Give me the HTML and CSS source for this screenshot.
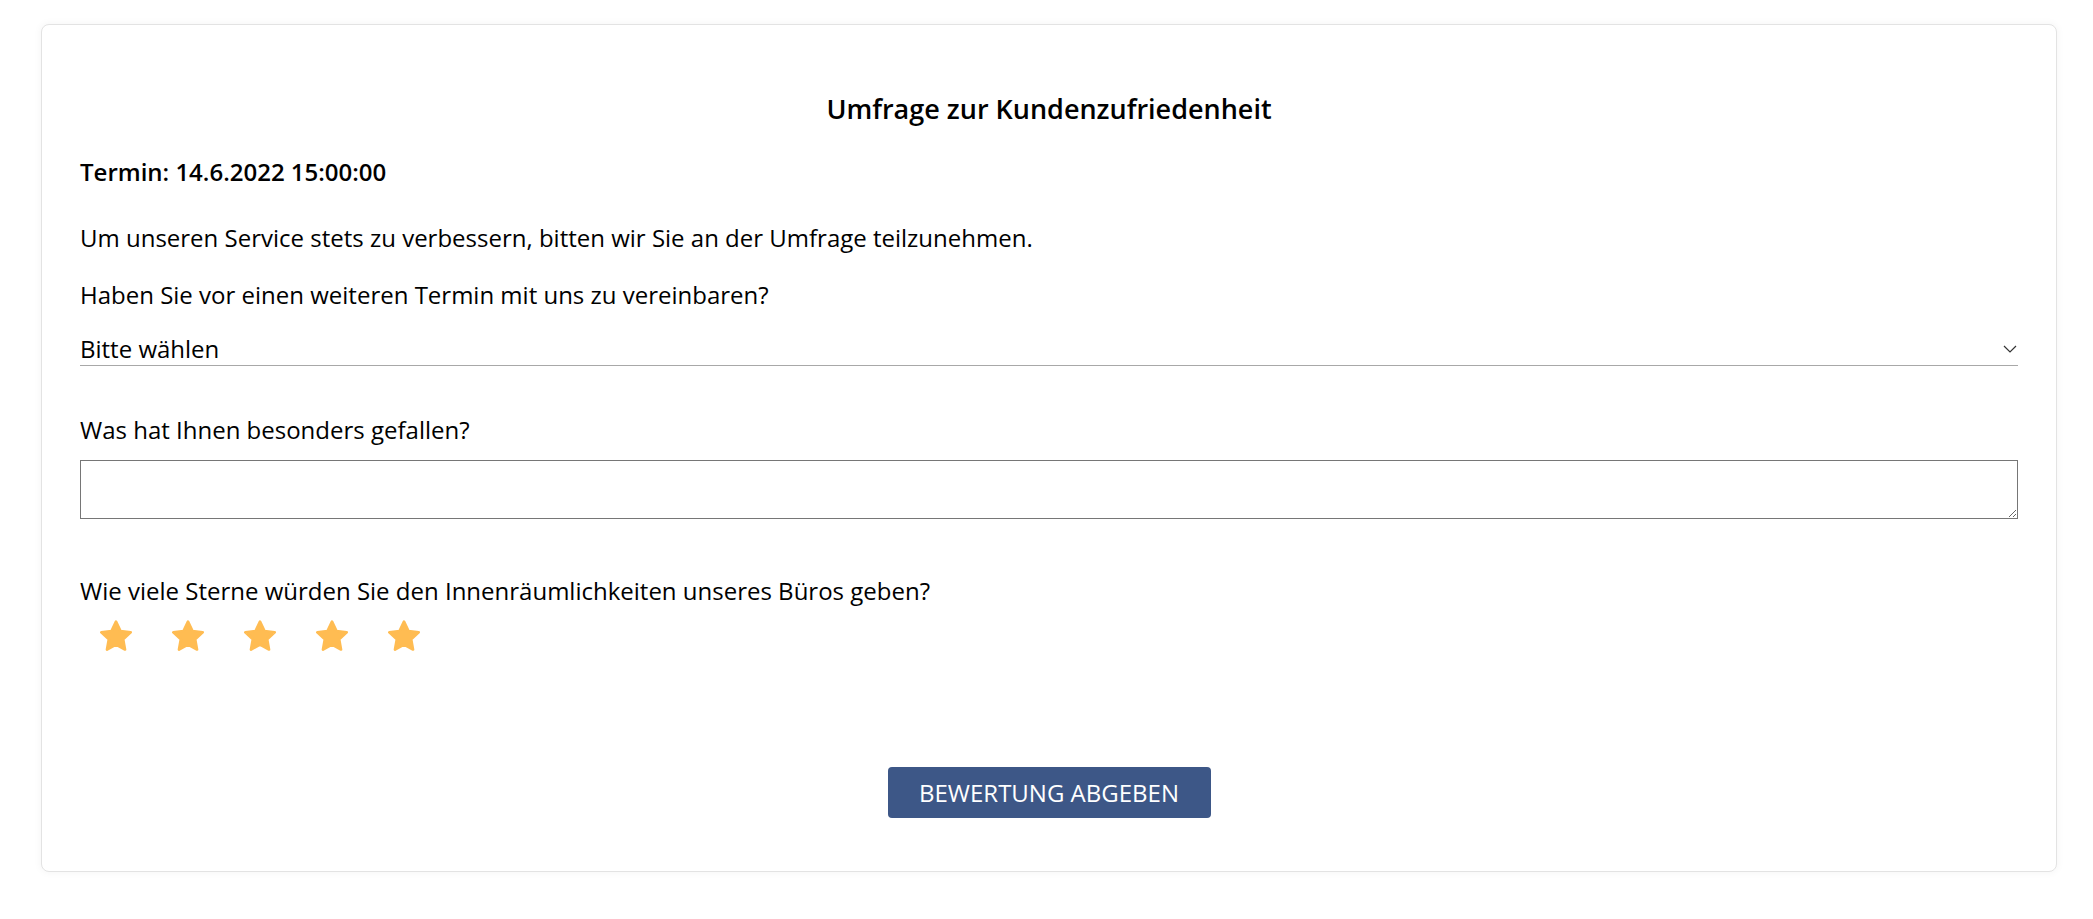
FILE: index.html
```html
<!DOCTYPE html>
<html lang="de">
<head>
  <meta charset="UTF-8" />
  <meta name="viewport" content="width=device-width, initial-scale=1.0"/>
  <title>Umfrage zur Kundenzufriedenheit</title>
  <link rel="stylesheet" href="styles.css">
</head>
<body>
  <div class="survey-card">
    <h2 class="survey-title">Umfrage zur Kundenzufriedenheit</h2>
    <div class="appointment">Termin: 14.6.2022 15:00:00</div>
    <p class="intro">Um unseren Service stets zu verbessern, bitten wir Sie an der Umfrage teilzunehmen.</p>

    <label class="question q-first" for="followup">Haben Sie vor einen weiteren Termin mit uns zu vereinbaren?</label>
    <div class="select-wrap">
      <select id="followup">
        <option>Bitte wählen</option>
        <option>Ja</option>
        <option>Nein</option>
      </select>
      <svg class="chevron" width="14" height="8" viewBox="0 0 14 8">
        <path d="M1 1l6 6 6-6" fill="none" stroke="#333" stroke-width="1.2"/>
      </svg>
    </div>

    <label class="question q-text" for="liked">Was hat Ihnen besonders gefallen?</label>
    <textarea id="liked" class="answer"></textarea>

    <div class="question q-stars">Wie viele Sterne würden Sie den Innenräumlichkeiten unseres Büros geben?</div>
    <div class="stars" id="stars"></div>

    <div class="actions">
      <button class="btn-submit">BEWERTUNG ABGEBEN</button>
    </div>
  </div>

  <script>
    // five rating stars, all selected
    const STAR = '<svg viewBox="2.4 2.2 19.2 19.2" width="32" height="32"><path d="M12 3.2l2.7 5.6 6.1.8-4.5 4.2 1.1 6.1L12 17l-5.4 2.9 1.1-6.1-4.5-4.2 6.1-.8z" fill="#ffbc52" stroke="#ffbc52" stroke-width="1.6" stroke-linejoin="round"/></svg>';
    const stars = document.getElementById("stars");
    for (let i = 0; i < 5; i++) {
      const s = document.createElement("span");
      s.className = "star";
      s.innerHTML = STAR;
      stars.appendChild(s);
    }
  </script>
</body>
</html>
```

FILE: styles.css
```css
body {
  margin: 0;
  padding: 24px 36px 40px 41px;
  background: #fff;
  font-family: "Open Sans", "Noto Sans", Arial, sans-serif;
  color: #000;
}

.survey-card {
  background: #fff;
  border: 1px solid #e3e3e3;
  border-radius: 8px;
  box-shadow: 0 0 8px rgba(0, 0, 0, 0.05);
  padding: 66px 38px 53px 38px;
  display: flex;
  flex-direction: column;
}

.survey-title {
  margin: 0;
  text-align: center;
  font-size: 27px;
  font-weight: 600;
  line-height: 36px;
}

.appointment {
  margin-top: 29px;
  font-size: 24px;
  font-weight: 600;
  line-height: 32px;
}

.intro {
  margin: 34px 0 0;
  font-size: 24px;
  line-height: 32px;
}

.question {
  display: block;
  font-size: 24px;
  line-height: 32px;
}

.q-first { margin-top: 25px; }
.q-text { margin-top: 48px; }
.q-stars { margin-top: 56px; }

.select-wrap {
  margin-top: 22px;
  display: flex;
  align-items: center;
  border-bottom: 1px solid #a8a8a8;
}

.select-wrap select {
  flex: 1;
  appearance: none;
  border: none;
  background: transparent;
  padding: 0;
  margin: 0;
  font-family: inherit;
  font-size: 24px;
  line-height: 32px;
  height: 32px;
  color: #000;
  outline: none;
}

.chevron {
  margin-right: 1px;
}

.answer {
  margin-top: 14px;
  height: 59px;
  box-sizing: border-box;
  width: 100%;
  border: 1px solid #767676;
  font-family: inherit;
  font-size: 24px;
}

.stars {
  margin-top: 13px;
  padding-left: 20px;
  display: flex;
  gap: 40px;
}

.star {
  display: block;
  width: 32px;
  height: 32px;
}

.star svg {
  display: block;
}

.actions {
  margin-top: 115px;
  display: flex;
  justify-content: center;
}

.btn-submit {
  width: 323px;
  height: 51px;
  background: #3d5787;
  color: #fff;
  border: none;
  border-radius: 4px;
  font-family: inherit;
  font-size: 24px;
  cursor: pointer;
}
```
